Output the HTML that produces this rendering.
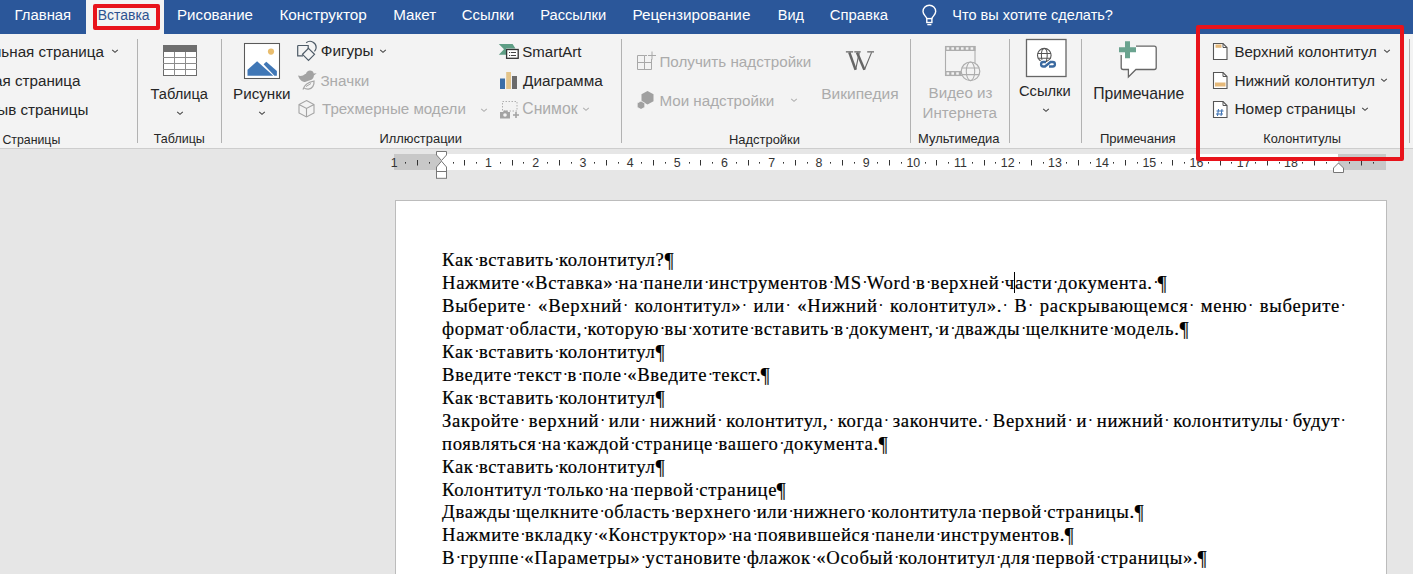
<!DOCTYPE html><html><head><meta charset="utf-8"><style>*{margin:0;padding:0}
html,body{width:1413px;height:574px;overflow:hidden}
body{position:relative;background:#e6e6e6;font-family:'Liberation Sans', sans-serif}
.dl{position:absolute;left:442px;width:898px;letter-spacing:0.69px;-webkit-text-stroke:0.2px #000;font-family:'Liberation Serif', serif;font-size:18.67px;line-height:normal;color:#000;white-space:pre}
.j{white-space:normal;text-align:justify;text-align-last:justify}
.dl b{font-weight:normal;display:inline-block;transform:scale(1.04,1.11);transform-origin:50% 22%}
.dl i{font-style:normal;display:inline-block;width:0;position:relative;left:0.6px;top:-1px;font-size:16px;-webkit-text-stroke:0}
</style></head><body><div style="position:absolute;left:0px;top:0px;width:1413px;height:34px;background:#2b579a"></div>
<div style="position:absolute;left:86px;top:0px;width:78px;height:34px;background:#f3f3f3"></div>
<div style="position:absolute;left:0px;top:34px;width:1413px;height:114px;background:#f3f3f3"></div>
<div style="position:absolute;left:0px;top:148px;width:1413px;height:1px;background:#cdcdcd"></div>
<div style="position:absolute;left:14.60px;top:6.80px;font-size:14.87px;font-family:'Liberation Sans', sans-serif;color:#ffffff;white-space:pre;line-height:normal;">Главная</div>
<div style="position:absolute;left:177.00px;top:5.80px;font-size:15.08px;font-family:'Liberation Sans', sans-serif;color:#ffffff;white-space:pre;line-height:normal;">Рисование</div>
<div style="position:absolute;left:279.40px;top:5.80px;font-size:15.34px;font-family:'Liberation Sans', sans-serif;color:#ffffff;white-space:pre;line-height:normal;">Конструктор</div>
<div style="position:absolute;left:393.20px;top:5.80px;font-size:15.21px;font-family:'Liberation Sans', sans-serif;color:#ffffff;white-space:pre;line-height:normal;">Макет</div>
<div style="position:absolute;left:461.70px;top:6.80px;font-size:14.91px;font-family:'Liberation Sans', sans-serif;color:#ffffff;white-space:pre;line-height:normal;">Ссылки</div>
<div style="position:absolute;left:540.20px;top:6.80px;font-size:14.7px;font-family:'Liberation Sans', sans-serif;color:#ffffff;white-space:pre;line-height:normal;">Рассылки</div>
<div style="position:absolute;left:632.40px;top:5.80px;font-size:15.29px;font-family:'Liberation Sans', sans-serif;color:#ffffff;white-space:pre;line-height:normal;">Рецензирование</div>
<div style="position:absolute;left:777.70px;top:6.80px;font-size:14.56px;font-family:'Liberation Sans', sans-serif;color:#ffffff;white-space:pre;line-height:normal;">Вид</div>
<div style="position:absolute;left:829.80px;top:6.80px;font-size:14.85px;font-family:'Liberation Sans', sans-serif;color:#ffffff;white-space:pre;line-height:normal;">Справка</div>
<div style="position:absolute;left:952.30px;top:6.80px;font-size:14.54px;font-family:'Liberation Sans', sans-serif;color:#ffffff;white-space:pre;line-height:normal;">Что вы хотите сделать?</div>
<div style="position:absolute;left:97.80px;top:6.80px;font-size:13.95px;font-family:'Liberation Sans', sans-serif;color:#2d5290;white-space:pre;line-height:normal;">Вставка</div>
<svg style="position:absolute;left:917px;top:0px" width="26" height="28" viewBox="0 0 26 28"><path d="M9.8 18.6C9.6 16.6 6 15 6 11.6A6.35 6.35 0 0 1 18.7 11.6C18.7 15 15.1 16.6 14.9 18.6" fill="none" stroke="#fff" stroke-width="1.4"/><rect x="9.8" y="18.6" width="5.1" height="3.9" fill="none" stroke="#fff" stroke-width="1.4"/><path d="M10.3 24.6h4.1" stroke="#fff" stroke-width="1.4"/></svg>
<div style="position:absolute;left:137px;top:39px;width:1px;height:104px;background:#b2b2b2"></div>
<div style="position:absolute;left:221px;top:39px;width:1px;height:104px;background:#b2b2b2"></div>
<div style="position:absolute;left:621px;top:39px;width:1px;height:104px;background:#b2b2b2"></div>
<div style="position:absolute;left:910px;top:39px;width:1px;height:104px;background:#b2b2b2"></div>
<div style="position:absolute;left:1009px;top:39px;width:1px;height:104px;background:#b2b2b2"></div>
<div style="position:absolute;left:1081px;top:39px;width:1px;height:104px;background:#b2b2b2"></div>
<div style="position:absolute;left:1409px;top:39px;width:1px;height:104px;background:#b2b2b2"></div>
<div style="position:absolute;left:-39.00px;top:42.60px;font-size:15.2px;font-family:'Liberation Sans', sans-serif;color:#262626;white-space:pre;line-height:normal;">Титульная страница</div>
<div style="position:absolute;left:-38.60px;top:72.00px;font-size:15.2px;font-family:'Liberation Sans', sans-serif;color:#262626;white-space:pre;line-height:normal;">Пустая страница</div>
<div style="position:absolute;left:-36.10px;top:100.80px;font-size:15.2px;font-family:'Liberation Sans', sans-serif;color:#262626;white-space:pre;line-height:normal;">Разрыв страницы</div>
<div style="position:absolute;left:2.40px;top:132.70px;font-size:12.34px;font-family:'Liberation Sans', sans-serif;color:#262626;white-space:pre;line-height:normal;">Страницы</div>
<svg style="position:absolute;left:110.5px;top:47.5px" width="8" height="6" viewBox="0 0 8 6"><path d="M1.2 1.8l2.8 2.6 2.8-2.6" fill="none" stroke="#444" stroke-width="1.05"/></svg>
<svg style="position:absolute;left:162px;top:44px" width="36" height="33" viewBox="0 0 36 33"><rect x="1.5" y="1.5" width="33" height="30" fill="#fff" stroke="#6b6b6b" stroke-width="1"/><rect x="1" y="1" width="34" height="7" fill="#6e6e6e"/><path d="M12.5 8v24M23.5 8v24M1 13.5h34M1 19.5h34M1 25.5h34" stroke="#8c8c8c" stroke-width="1"/></svg>
<div style="position:absolute;left:150.60px;top:85.70px;font-size:14.61px;font-family:'Liberation Sans', sans-serif;color:#262626;white-space:pre;line-height:normal;">Таблица</div>
<svg style="position:absolute;left:176px;top:109.5px" width="8" height="6" viewBox="0 0 8 6"><path d="M1.2 1.8l2.8 2.6 2.8-2.6" fill="none" stroke="#444" stroke-width="1.05"/></svg>
<div style="position:absolute;left:153.80px;top:131.90px;font-size:12.49px;font-family:'Liberation Sans', sans-serif;color:#262626;white-space:pre;line-height:normal;">Таблицы</div>
<svg style="position:absolute;left:243px;top:42px" width="38" height="38" viewBox="0 0 38 38"><rect x="1.5" y="1.5" width="35" height="35" fill="#fff" stroke="#5a5a5a" stroke-width="1.05"/><circle cx="28" cy="9.6" r="3.1" fill="#e9bd6e"/><path d="M4.5 33.7V27.8L14.1 19.2 30.3 33.7z" fill="#4077b6"/><path d="M20.6 22.3l2.7-2.5 10.6 9.1v4.8h-2.5z" fill="#4077b6"/></svg>
<div style="position:absolute;left:233.00px;top:84.70px;font-size:15.21px;font-family:'Liberation Sans', sans-serif;color:#262626;white-space:pre;line-height:normal;">Рисунки</div>
<svg style="position:absolute;left:258px;top:109.5px" width="8" height="6" viewBox="0 0 8 6"><path d="M1.2 1.8l2.8 2.6 2.8-2.6" fill="none" stroke="#444" stroke-width="1.05"/></svg>
<svg style="position:absolute;left:295px;top:39px" width="22" height="23" viewBox="0 0 22 23"><path d="M2.7 6.5h10.5v3.5M8 16.8H2.7V6.5" fill="none" stroke="#4d5a66" stroke-width="1.2"/><path d="M13.5 9.3l6 6-6 6-6-6z" fill="none" stroke="#4d5a66" stroke-width="1.2"/><path d="M11.2 3.8a6 6 0 0 1 9.8 5.6 6 6 0 0 1-1.6 3" fill="none" stroke="#4d5a66" stroke-width="1.2"/></svg>
<div style="position:absolute;left:320.80px;top:42.20px;font-size:15.33px;font-family:'Liberation Sans', sans-serif;color:#262626;white-space:pre;line-height:normal;">Фигуры</div>
<svg style="position:absolute;left:379px;top:47.5px" width="8" height="6" viewBox="0 0 8 6"><path d="M1.2 1.8l2.8 2.6 2.8-2.6" fill="none" stroke="#444" stroke-width="1.05"/></svg>
<svg style="position:absolute;left:296px;top:69px" width="22" height="22" viewBox="0 0 22 22"><path d="M14 1.5c2 0 3.5 1.3 3.7 3l3-.2-2.8 2.2c0 2-1 3.3-2.5 4.2L9 13c-2.5 0-5.5-2-7-6.5 1.8.5 3.5.5 5 0 .8-1 2-1.5 3-1.8.3-1.8 2-3.2 4-3.2z" fill="#a3a3a3"/><path d="M7 20.5c1-4 4-7 11-8.5.5 4.5-2 8-5.5 8.2-2 .1-3.8-.5-4.8-1.5" fill="#f3f3f3" stroke="#a3a3a3" stroke-width="1.2"/><path d="M10 17.5l5-3" stroke="#a3a3a3" stroke-width="1"/></svg>
<div style="position:absolute;left:320.40px;top:71.50px;font-size:15.27px;font-family:'Liberation Sans', sans-serif;color:#ababab;white-space:pre;line-height:normal;">Значки</div>
<svg style="position:absolute;left:297px;top:99px" width="19" height="19" viewBox="0 0 19 19"><path d="M9.5 1.5l7.5 4v8.5l-7.5 4-7.5-4V5.5z M2 5.5l7.5 4 7.5-4 M9.5 9.5v8.5" fill="none" stroke="#a3a3a3" stroke-width="1.1"/></svg>
<div style="position:absolute;left:322.00px;top:100.40px;font-size:15.12px;font-family:'Liberation Sans', sans-serif;color:#ababab;white-space:pre;line-height:normal;">Трехмерные модели</div>
<svg style="position:absolute;left:480px;top:106.5px" width="8" height="6" viewBox="0 0 8 6"><path d="M1.2 1.8l2.8 2.6 2.8-2.6" fill="none" stroke="#b0b0b0" stroke-width="1.05"/></svg>
<div style="position:absolute;left:379.40px;top:131.40px;font-size:12.92px;font-family:'Liberation Sans', sans-serif;color:#262626;white-space:pre;line-height:normal;">Иллюстрации</div>
<svg style="position:absolute;left:497px;top:43px" width="24" height="17" viewBox="0 0 24 17"><path d="M1.8 1H15.6L18.5 5.5H9V11.8H1.8L7 6.3Z" fill="#5e9e85"/><rect x="9.6" y="6.5" width="11.6" height="8.8" fill="#fff" stroke="#333" stroke-width="1.3"/><path d="M12 9.5h1.2M14 9.5h5M12 12.5h1.2M14 12.5h5" stroke="#444" stroke-width="1"/></svg>
<div style="position:absolute;left:522.30px;top:42.60px;font-size:15.02px;font-family:'Liberation Sans', sans-serif;color:#262626;white-space:pre;line-height:normal;">SmartArt</div>
<svg style="position:absolute;left:499px;top:71px" width="19" height="18" viewBox="0 0 19 18"><rect x="1" y="7.5" width="5" height="10.5" fill="#3b6ea8"/><rect x="7.2" y="1" width="4.8" height="17" fill="#e3c48a"/><rect x="13" y="5" width="5" height="13" fill="#6b6b6b"/></svg>
<div style="position:absolute;left:523.00px;top:71.50px;font-size:15.34px;font-family:'Liberation Sans', sans-serif;color:#262626;white-space:pre;line-height:normal;">Диаграмма</div>
<svg style="position:absolute;left:499px;top:100px" width="22" height="19" viewBox="0 0 22 19"><rect x="3.5" y="1.5" width="14.5" height="9.5" fill="none" stroke="#b0b0b0" stroke-width="1" stroke-dasharray="1.5 1.5"/><path d="M1 12h3l1-1.5h3l1 1.5h2v6.5H1z" fill="#a3a3a3"/><circle cx="6" cy="15" r="1.8" fill="#f3f3f3"/><path d="M14 15h6M17 12v6" stroke="#a3a3a3" stroke-width="1.6"/></svg>
<div style="position:absolute;left:522.30px;top:100.20px;font-size:15.73px;font-family:'Liberation Sans', sans-serif;color:#ababab;white-space:pre;line-height:normal;">Снимок</div>
<svg style="position:absolute;left:582px;top:106px" width="8" height="6" viewBox="0 0 8 6"><path d="M1.2 1.8l2.8 2.6 2.8-2.6" fill="none" stroke="#b0b0b0" stroke-width="1.05"/></svg>
<svg style="position:absolute;left:636px;top:50px" width="22" height="21" viewBox="0 0 22 21"><path d="M1.5 19.5V5.5H8.5V19.5M1.5 12.5H15.5M1.5 19.5H15.5V9M8.5 5.5H11" fill="none" stroke="#a8a8a8" stroke-width="1"/><path d="M12 5.5h8M16 1.5v8" stroke="#a8a8a8" stroke-width="1"/></svg>
<div style="position:absolute;left:659.40px;top:52.70px;font-size:15.21px;font-family:'Liberation Sans', sans-serif;color:#ababab;white-space:pre;line-height:normal;">Получить надстройки</div>
<svg style="position:absolute;left:636px;top:90px" width="20" height="19" viewBox="0 0 20 19"><path d="M11.5 1l6 3.3v7l-6 3.3-6-3.3v-7z" fill="#a0a0a0"/><path d="M5 11l3.8 2.1v4.2L5 19.4 1.2 17.3v-4.2z" fill="#a0a0a0" stroke="#f3f3f3" stroke-width="0.8"/></svg>
<div style="position:absolute;left:659.40px;top:91.70px;font-size:15.2px;font-family:'Liberation Sans', sans-serif;color:#ababab;white-space:pre;line-height:normal;">Мои надстройки</div>
<svg style="position:absolute;left:790px;top:97px" width="8" height="6" viewBox="0 0 8 6"><path d="M1.2 1.8l2.8 2.6 2.8-2.6" fill="none" stroke="#b0b0b0" stroke-width="1.05"/></svg>
<div style="position:absolute;left:729.00px;top:131.70px;font-size:12.95px;font-family:'Liberation Sans', sans-serif;color:#262626;white-space:pre;line-height:normal;">Надстройки</div>
<svg style="position:absolute;left:844px;top:50px" width="32" height="22" viewBox="0 0 32 22"><g fill="none" stroke="#666"><path d="M5.3 2.4L11.6 19.8" stroke-width="2.5"/><path d="M11.6 19.8L15.3 2.4" stroke-width="1.1"/><path d="M13 2.4L20.4 19.8" stroke-width="2.5"/><path d="M20.4 19.8L27.6 2.4" stroke-width="1.1"/></g><path d="M1.9 1.9h7.2M10.3 1.9h6.4M23.2 1.9h6.8" stroke="#666" stroke-width="1.1"/></svg>
<div style="position:absolute;left:821.20px;top:84.70px;font-size:15.54px;font-family:'Liberation Sans', sans-serif;color:#ababab;white-space:pre;line-height:normal;">Википедия</div>
<svg style="position:absolute;left:944px;top:45px" width="38" height="37" viewBox="0 0 38 37"><rect x="1.5" y="1.5" width="29.5" height="29" fill="none" stroke="#adadad" stroke-width="1.1"/><rect x="1" y="1" width="30.5" height="5" fill="#adadad"/><rect x="1" y="26" width="16" height="5" fill="#adadad"/><rect x="2.6" y="2.3" width="2.6" height="2.4" fill="#f3f3f3"/><rect x="7.4" y="2.3" width="2.6" height="2.4" fill="#f3f3f3"/><rect x="12.2" y="2.3" width="2.6" height="2.4" fill="#f3f3f3"/><rect x="17.0" y="2.3" width="2.6" height="2.4" fill="#f3f3f3"/><rect x="21.8" y="2.3" width="2.6" height="2.4" fill="#f3f3f3"/><rect x="26.6" y="2.3" width="2.6" height="2.4" fill="#f3f3f3"/><rect x="2.6" y="27.3" width="2.6" height="2.4" fill="#f3f3f3"/><rect x="7.4" y="27.3" width="2.6" height="2.4" fill="#f3f3f3"/><rect x="12.2" y="27.3" width="2.6" height="2.4" fill="#f3f3f3"/><circle cx="26.5" cy="26.3" r="9.3" fill="#f3f3f3" stroke="#adadad" stroke-width="1.2"/><ellipse cx="26.5" cy="26.3" rx="4.2" ry="9.3" fill="none" stroke="#adadad" stroke-width="1.1"/><path d="M17.8 23h17.4M17.8 29.6h17.4" stroke="#adadad" stroke-width="1.1"/></svg>
<div style="position:absolute;left:928.60px;top:84.20px;font-size:15.15px;font-family:'Liberation Sans', sans-serif;color:#ababab;white-space:pre;line-height:normal;">Видео из</div>
<div style="position:absolute;left:922.60px;top:104.40px;font-size:15.13px;font-family:'Liberation Sans', sans-serif;color:#ababab;white-space:pre;line-height:normal;">Интернета</div>
<div style="position:absolute;left:918.00px;top:131.40px;font-size:12.98px;font-family:'Liberation Sans', sans-serif;color:#262626;white-space:pre;line-height:normal;">Мультимедиа</div>
<svg style="position:absolute;left:1025px;top:38px" width="42" height="40" viewBox="0 0 42 40"><rect x="1.5" y="1.5" width="39.5" height="37" fill="#fff" stroke="#666" stroke-width="1.3"/><circle cx="19.3" cy="17.2" r="6.8" fill="#fff" stroke="#555" stroke-width="1.1"/><ellipse cx="19.3" cy="17.2" rx="2.9" ry="6.8" fill="none" stroke="#555" stroke-width="1.05"/><path d="M12.5 15.5h13.6M12.8 20.3h13" stroke="#555" stroke-width="1.05"/><path d="M21 24H18.3a2.25 2.25 0 0 0 0 4.5H20L25.5 24H27.7a2.25 2.25 0 0 1 0 4.5H24" fill="none" stroke="#fff" stroke-width="4.5"/><path d="M21 24H18.3a2.25 2.25 0 0 0 0 4.5H20L25.5 24H27.7a2.25 2.25 0 0 1 0 4.5H24" fill="none" stroke="#3b6aa0" stroke-width="2.3"/></svg>
<div style="position:absolute;left:1019.00px;top:82.60px;font-size:14.71px;font-family:'Liberation Sans', sans-serif;color:#262626;white-space:pre;line-height:normal;">Ссылки</div>
<svg style="position:absolute;left:1042px;top:107px" width="8" height="6" viewBox="0 0 8 6"><path d="M1.2 1.8l2.8 2.6 2.8-2.6" fill="none" stroke="#444" stroke-width="1.05"/></svg>
<svg style="position:absolute;left:1117px;top:39px" width="44" height="40" viewBox="0 0 44 40"><path d="M4.2 16v12.5a2 2 0 0 0 2 2h5.2v7.5l7.5-7.5h18.3a2 2 0 0 0 2-2V9.2a2 2 0 0 0-2-2H19" fill="#fff" stroke="#666" stroke-width="1.3"/><path d="M8 2.2h5v6h6v5h-6v6H8v-6H2v-5h6z" fill="#6aa38f"/></svg>
<div style="position:absolute;left:1093.20px;top:85.00px;font-size:15.72px;font-family:'Liberation Sans', sans-serif;color:#262626;white-space:pre;line-height:normal;">Примечание</div>
<div style="position:absolute;left:1099.90px;top:131.40px;font-size:13.13px;font-family:'Liberation Sans', sans-serif;color:#262626;white-space:pre;line-height:normal;">Примечания</div>
<svg style="position:absolute;left:1212px;top:42px" width="17" height="19" viewBox="0 0 17 19"><path d="M1.5 1.5h9.5l4 4v12h-13.5z" fill="#fff" stroke="#555" stroke-width="1.1"/><path d="M11 1.5v4h4" fill="none" stroke="#555" stroke-width="1"/><rect x="3.5" y="2.5" width="6" height="3.3" fill="#e5b97a"/></svg>
<div style="position:absolute;left:1234.40px;top:42.60px;font-size:15.07px;font-family:'Liberation Sans', sans-serif;color:#262626;white-space:pre;line-height:normal;">Верхний колонтитул</div>
<svg style="position:absolute;left:1382.5px;top:47.5px" width="8" height="6" viewBox="0 0 8 6"><path d="M1.2 1.8l2.8 2.6 2.8-2.6" fill="none" stroke="#444" stroke-width="1.05"/></svg>
<svg style="position:absolute;left:1212px;top:71px" width="17" height="19" viewBox="0 0 17 19"><path d="M1.5 1.5h9.5l4 4v12h-13.5z" fill="#fff" stroke="#555" stroke-width="1.1"/><path d="M11 1.5v4h4" fill="none" stroke="#555" stroke-width="1"/><rect x="3" y="11.5" width="10.5" height="4" fill="#e5b97a"/></svg>
<div style="position:absolute;left:1234.40px;top:71.50px;font-size:15.42px;font-family:'Liberation Sans', sans-serif;color:#262626;white-space:pre;line-height:normal;">Нижний колонтитул</div>
<svg style="position:absolute;left:1380px;top:76.5px" width="8" height="6" viewBox="0 0 8 6"><path d="M1.2 1.8l2.8 2.6 2.8-2.6" fill="none" stroke="#444" stroke-width="1.05"/></svg>
<svg style="position:absolute;left:1212px;top:100px" width="17" height="19" viewBox="0 0 17 19"><path d="M1.5 1.5h9.5l4 4v12h-13.5z" fill="#fff" stroke="#555" stroke-width="1.1"/><path d="M11 1.5v4h4" fill="none" stroke="#555" stroke-width="1"/><path d="M6.5 9l-1 7M10 9l-1 7M4.5 11h7M4 14h7" stroke="#3a6fb0" stroke-width="1"/></svg>
<div style="position:absolute;left:1234.40px;top:100.40px;font-size:15.49px;font-family:'Liberation Sans', sans-serif;color:#262626;white-space:pre;line-height:normal;">Номер страницы</div>
<svg style="position:absolute;left:1360.5px;top:105.5px" width="8" height="6" viewBox="0 0 8 6"><path d="M1.2 1.8l2.8 2.6 2.8-2.6" fill="none" stroke="#444" stroke-width="1.05"/></svg>
<div style="position:absolute;left:1263.30px;top:131.40px;font-size:12.77px;font-family:'Liberation Sans', sans-serif;color:#262626;white-space:pre;line-height:normal;">Колонтитулы</div>
<div style="position:absolute;left:394px;top:154px;width:992px;height:16px;background:#c8c8c8"></div>
<div style="position:absolute;left:441px;top:154px;width:897px;height:16px;background:#fff"></div>
<svg style="position:absolute;left:386px;top:154px" width="1010" height="16" viewBox="0 0 1010 16"><text x="8.1" y="12.8" text-anchor="middle" font-size="12.4" font-family="Liberation Sans" fill="#333">1</text><rect x="19" y="8" width="1" height="1.6" fill="#333"/><rect x="31" y="6" width="1" height="5.5" fill="#333"/><rect x="43" y="8" width="1" height="1.6" fill="#333"/><rect x="67" y="8" width="1" height="1.6" fill="#333"/><rect x="78" y="6" width="1" height="5.5" fill="#333"/><rect x="90" y="8" width="1" height="1.6" fill="#333"/><text x="102.5" y="12.8" text-anchor="middle" font-size="12.4" font-family="Liberation Sans" fill="#333">1</text><rect x="114" y="8" width="1" height="1.6" fill="#333"/><rect x="126" y="6" width="1" height="5.5" fill="#333"/><rect x="137" y="8" width="1" height="1.6" fill="#333"/><text x="149.7" y="12.8" text-anchor="middle" font-size="12.4" font-family="Liberation Sans" fill="#333">2</text><rect x="161" y="8" width="1" height="1.6" fill="#333"/><rect x="173" y="6" width="1" height="5.5" fill="#333"/><rect x="185" y="8" width="1" height="1.6" fill="#333"/><text x="196.9" y="12.8" text-anchor="middle" font-size="12.4" font-family="Liberation Sans" fill="#333">3</text><rect x="208" y="8" width="1" height="1.6" fill="#333"/><rect x="220" y="6" width="1" height="5.5" fill="#333"/><rect x="232" y="8" width="1" height="1.6" fill="#333"/><text x="244.1" y="12.8" text-anchor="middle" font-size="12.4" font-family="Liberation Sans" fill="#333">4</text><rect x="255" y="8" width="1" height="1.6" fill="#333"/><rect x="267" y="6" width="1" height="5.5" fill="#333"/><rect x="279" y="8" width="1" height="1.6" fill="#333"/><text x="291.3" y="12.8" text-anchor="middle" font-size="12.4" font-family="Liberation Sans" fill="#333">5</text><rect x="303" y="8" width="1" height="1.6" fill="#333"/><rect x="314" y="6" width="1" height="5.5" fill="#333"/><rect x="326" y="8" width="1" height="1.6" fill="#333"/><text x="338.5" y="12.8" text-anchor="middle" font-size="12.4" font-family="Liberation Sans" fill="#333">6</text><rect x="350" y="8" width="1" height="1.6" fill="#333"/><rect x="362" y="6" width="1" height="5.5" fill="#333"/><rect x="373" y="8" width="1" height="1.6" fill="#333"/><text x="385.7" y="12.8" text-anchor="middle" font-size="12.4" font-family="Liberation Sans" fill="#333">7</text><rect x="397" y="8" width="1" height="1.6" fill="#333"/><rect x="409" y="6" width="1" height="5.5" fill="#333"/><rect x="421" y="8" width="1" height="1.6" fill="#333"/><text x="432.9" y="12.8" text-anchor="middle" font-size="12.4" font-family="Liberation Sans" fill="#333">8</text><rect x="444" y="8" width="1" height="1.6" fill="#333"/><rect x="456" y="6" width="1" height="5.5" fill="#333"/><rect x="468" y="8" width="1" height="1.6" fill="#333"/><text x="480.1" y="12.8" text-anchor="middle" font-size="12.4" font-family="Liberation Sans" fill="#333">9</text><rect x="491" y="8" width="1" height="1.6" fill="#333"/><rect x="503" y="6" width="1" height="5.5" fill="#333"/><rect x="515" y="8" width="1" height="1.6" fill="#333"/><text x="527.3" y="12.8" text-anchor="middle" font-size="12.4" font-family="Liberation Sans" fill="#333">10</text><rect x="539" y="8" width="1" height="1.6" fill="#333"/><rect x="550" y="6" width="1" height="5.5" fill="#333"/><rect x="562" y="8" width="1" height="1.6" fill="#333"/><text x="574.5" y="12.8" text-anchor="middle" font-size="12.4" font-family="Liberation Sans" fill="#333">11</text><rect x="586" y="8" width="1" height="1.6" fill="#333"/><rect x="598" y="6" width="1" height="5.5" fill="#333"/><rect x="609" y="8" width="1" height="1.6" fill="#333"/><text x="621.7" y="12.8" text-anchor="middle" font-size="12.4" font-family="Liberation Sans" fill="#333">12</text><rect x="633" y="8" width="1" height="1.6" fill="#333"/><rect x="645" y="6" width="1" height="5.5" fill="#333"/><rect x="657" y="8" width="1" height="1.6" fill="#333"/><text x="668.9" y="12.8" text-anchor="middle" font-size="12.4" font-family="Liberation Sans" fill="#333">13</text><rect x="680" y="8" width="1" height="1.6" fill="#333"/><rect x="692" y="6" width="1" height="5.5" fill="#333"/><rect x="704" y="8" width="1" height="1.6" fill="#333"/><text x="716.1" y="12.8" text-anchor="middle" font-size="12.4" font-family="Liberation Sans" fill="#333">14</text><rect x="727" y="8" width="1" height="1.6" fill="#333"/><rect x="739" y="6" width="1" height="5.5" fill="#333"/><rect x="751" y="8" width="1" height="1.6" fill="#333"/><text x="763.3" y="12.8" text-anchor="middle" font-size="12.4" font-family="Liberation Sans" fill="#333">15</text><rect x="775" y="8" width="1" height="1.6" fill="#333"/><rect x="786" y="6" width="1" height="5.5" fill="#333"/><rect x="798" y="8" width="1" height="1.6" fill="#333"/><text x="810.5" y="12.8" text-anchor="middle" font-size="12.4" font-family="Liberation Sans" fill="#333">16</text><rect x="822" y="8" width="1" height="1.6" fill="#333"/><rect x="834" y="6" width="1" height="5.5" fill="#333"/><rect x="845" y="8" width="1" height="1.6" fill="#333"/><text x="857.7" y="12.8" text-anchor="middle" font-size="12.4" font-family="Liberation Sans" fill="#333">17</text><rect x="869" y="8" width="1" height="1.6" fill="#333"/><rect x="881" y="6" width="1" height="5.5" fill="#333"/><rect x="893" y="8" width="1" height="1.6" fill="#333"/><text x="904.9" y="12.8" text-anchor="middle" font-size="12.4" font-family="Liberation Sans" fill="#333">18</text><rect x="916" y="8" width="1" height="1.6" fill="#333"/><rect x="928" y="6" width="1" height="5.5" fill="#333"/><rect x="940" y="8" width="1" height="1.6" fill="#333"/><rect x="963" y="8" width="1" height="1.6" fill="#333"/><rect x="975" y="6" width="1" height="5.5" fill="#333"/><rect x="987" y="8" width="1" height="1.6" fill="#333"/></svg>
<svg style="position:absolute;left:435px;top:150px" width="13" height="30" viewBox="0 0 13 30"><path d="M1.5 1.5h10v3.5l-5 5.5-5-5.5z" fill="#fff" stroke="#777" stroke-width="1"/><path d="M6.5 11.2l5 5.8v4.5h-10v-4.5z" fill="#fff" stroke="#777" stroke-width="1"/><rect x="1.5" y="21.5" width="10" height="6.8" fill="#fff" stroke="#777" stroke-width="1"/></svg>
<svg style="position:absolute;left:1332px;top:162px" width="13" height="12" viewBox="0 0 13 12"><path d="M6.5 1l5 5v4.5h-10V6z" fill="#fff" stroke="#777" stroke-width="1"/></svg>
<div style="position:absolute;left:395px;top:200px;width:992px;height:400px;background:#fff;box-sizing:border-box;border:1px solid #bcbcbc"></div>
<div class="dl" style="top:248.80px">Как<i>·</i> вставить<i>·</i> колонтитул?<b>¶</b></div>
<div class="dl" style="top:271.77px">Нажмите<i>·</i> «Вставка»<i>·</i> на<i>·</i> панели<i>·</i> инструментов<i>·</i> MS<i>·</i> Word<i>·</i> в<i>·</i> верхней<i>·</i> части<i>·</i> документа.<i>·</i> <b>¶</b></div>
<div class="dl j" style="top:294.74px">Выберите<i>·</i> «Верхний<i>·</i> колонтитул»<i>·</i> или<i>·</i> «Нижний<i>·</i> колонтитул».<i>·</i> В<i>·</i> раскрывающемся<i>·</i> меню<i>·</i> выберите<i>·</i></div>
<div class="dl" style="top:317.71px">формат<i>·</i> области,<i>·</i> которую<i>·</i> вы<i>·</i> хотите<i>·</i> вставить<i>·</i> в<i>·</i> документ,<i>·</i> и<i>·</i> дважды<i>·</i> щелкните<i>·</i> модель.<b>¶</b></div>
<div class="dl" style="top:340.68px">Как<i>·</i> вставить<i>·</i> колонтитул<b>¶</b></div>
<div class="dl" style="top:363.65px">Введите<i>·</i> текст<i>·</i> в<i>·</i> поле<i>·</i> «Введите<i>·</i> текст.<b>¶</b></div>
<div class="dl" style="top:386.62px">Как<i>·</i> вставить<i>·</i> колонтитул<b>¶</b></div>
<div class="dl j" style="top:409.59px">Закройте<i>·</i> верхний<i>·</i> или<i>·</i> нижний<i>·</i> колонтитул,<i>·</i> когда<i>·</i> закончите.<i>·</i> Верхний<i>·</i> и<i>·</i> нижний<i>·</i> колонтитулы<i>·</i> будут<i>·</i></div>
<div class="dl" style="top:432.56px">появляться<i>·</i> на<i>·</i> каждой<i>·</i> странице<i>·</i> вашего<i>·</i> документа.<b>¶</b></div>
<div class="dl" style="top:455.53px">Как<i>·</i> вставить<i>·</i> колонтитул<b>¶</b></div>
<div class="dl" style="top:478.50px">Колонтитул<i>·</i> только<i>·</i> на<i>·</i> первой<i>·</i> странице<b>¶</b></div>
<div class="dl" style="top:501.47px">Дважды<i>·</i> щелкните<i>·</i> область<i>·</i> верхнего<i>·</i> или<i>·</i> нижнего<i>·</i> колонтитула<i>·</i> первой<i>·</i> страницы.<b>¶</b></div>
<div class="dl" style="top:524.44px">Нажмите<i>·</i> вкладку<i>·</i> «Конструктор»<i>·</i> на<i>·</i> появившейся<i>·</i> панели<i>·</i> инструментов.<b>¶</b></div>
<div class="dl" style="top:547.41px">В<i>·</i> группе<i>·</i> «Параметры»<i>·</i> установите<i>·</i> флажок<i>·</i> «Особый<i>·</i> колонтитул<i>·</i> для<i>·</i> первой<i>·</i> страницы».<b>¶</b></div>
<div style="position:absolute;left:93px;top:4px;width:67px;height:26px;box-sizing:border-box;border:4px solid #e8131b;border-radius:2px"></div>
<div style="position:absolute;left:1196px;top:25px;width:208px;height:136px;box-sizing:border-box;border:4px solid #e8131b;border-radius:2px"></div>
<div style="position:absolute;left:1014px;top:272px;width:1px;height:21px;background:#000"></div></body></html>
